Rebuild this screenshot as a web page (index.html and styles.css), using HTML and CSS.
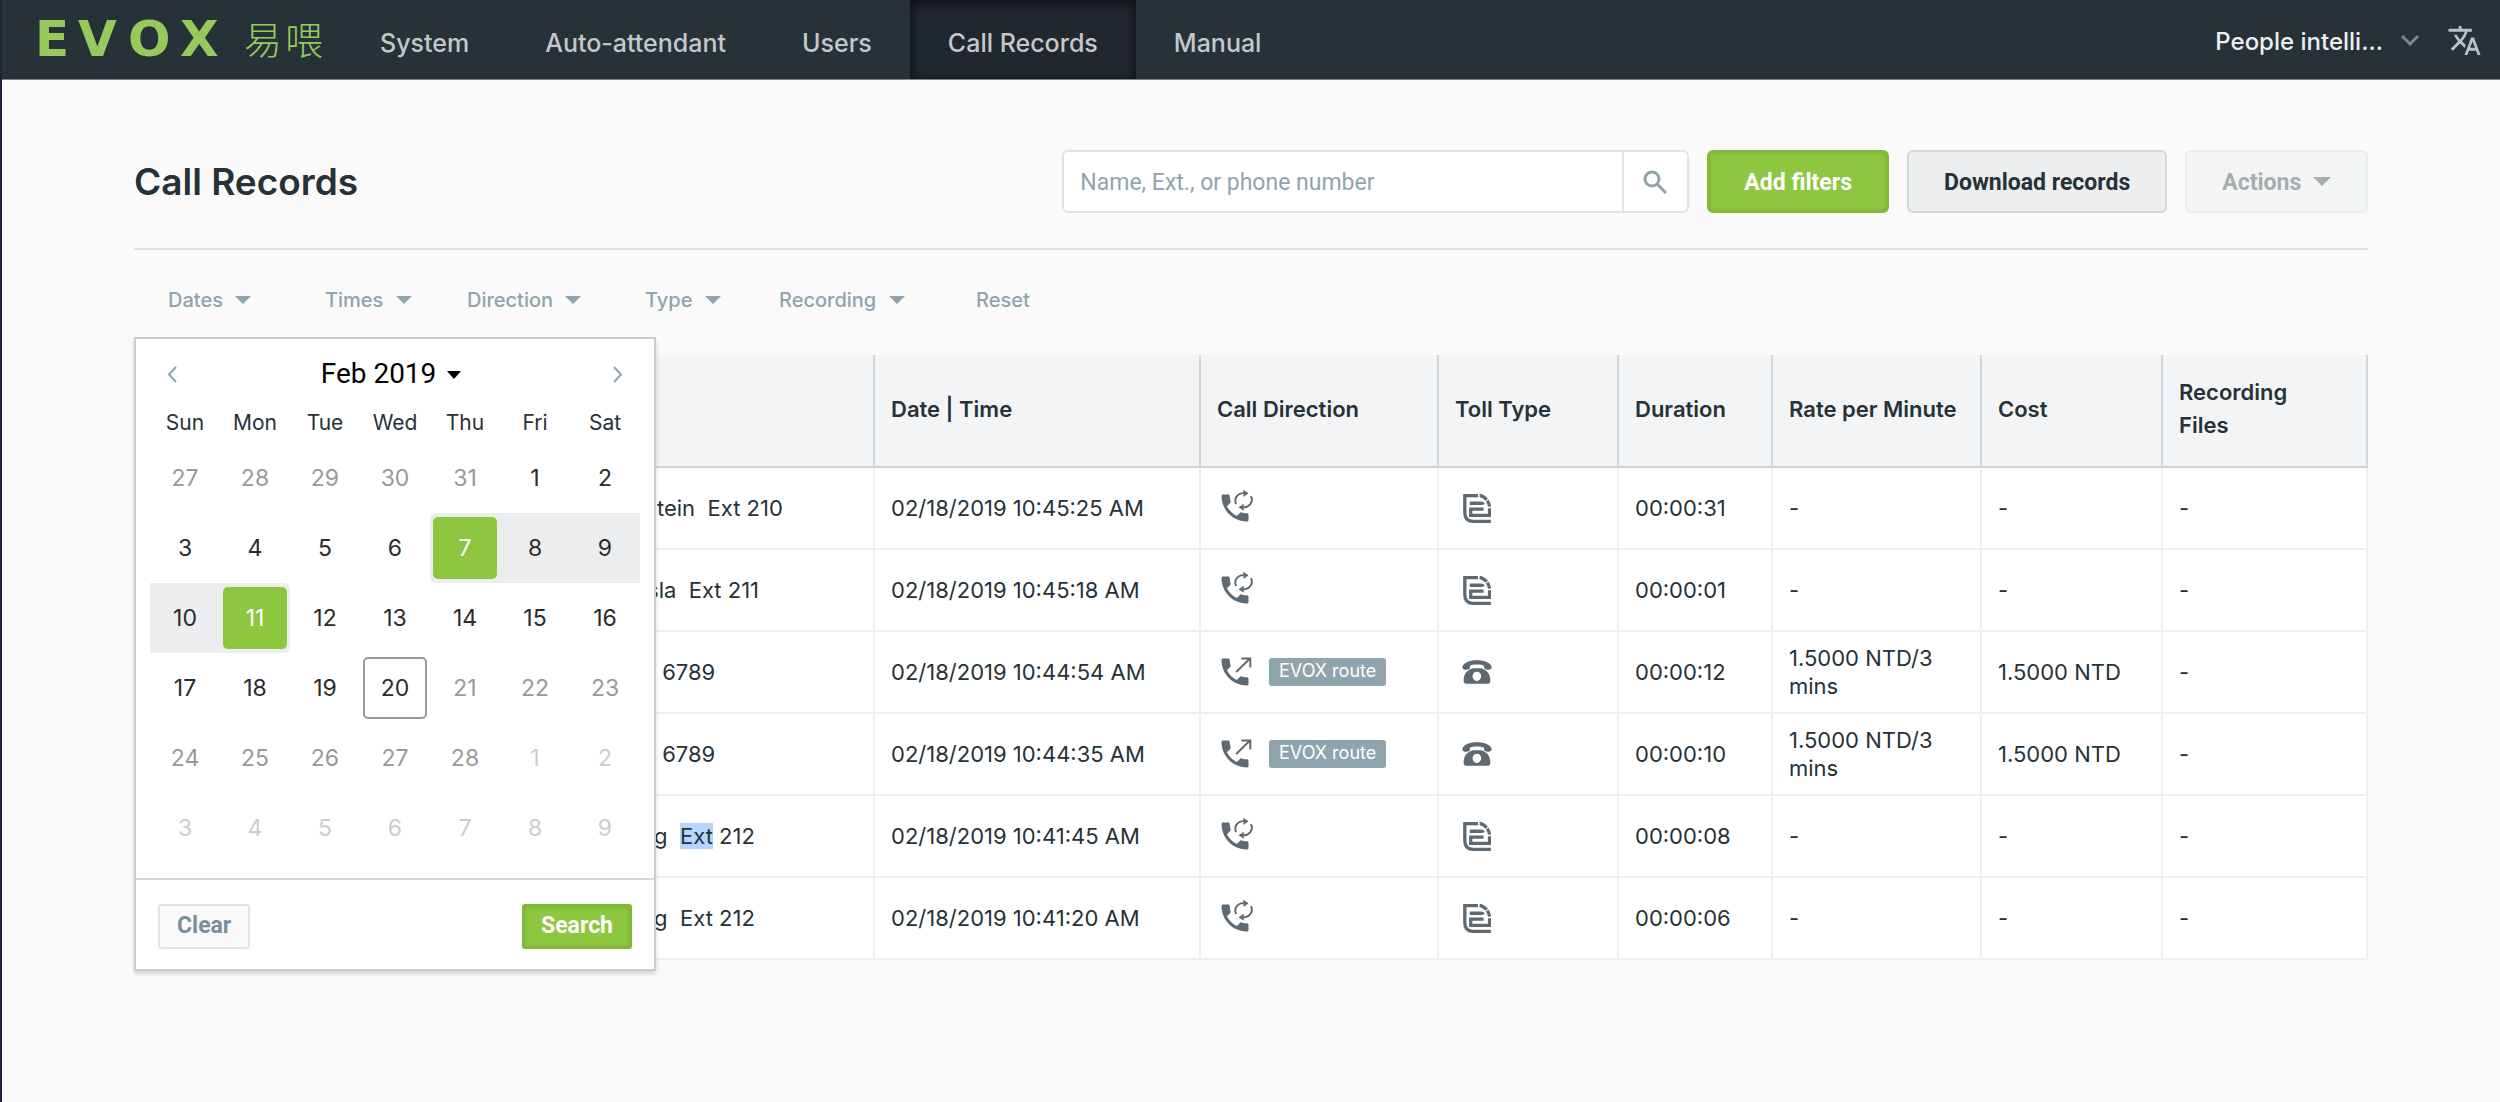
FILE: index.html
```
<!DOCTYPE html>
<html lang="en">
<head>
    <meta charset="UTF-8">
    <meta name="viewport" content="width=device-width, initial-scale=1.0">
    <title>Call Records</title>
    <link rel="stylesheet" href="styles.css">
</head>
<body>
    <svg class="sprite" aria-hidden="true">
        <symbol id="handset" viewBox="0 0 24 24">
            <path d="M6.62 10.79c1.44 2.83 3.76 5.14 6.59 6.59l2.2-2.2c.27-.27.67-.36 1.02-.24 1.12.37 2.33.57 3.57.57.55 0 1 .45 1 1V20c0 .55-.45 1-1 1-9.39 0-17-7.61-17-17 0-.55.45-1 1-1h3.5c.55 0 1 .45 1 1 0 1.25.2 2.45.57 3.57.11.35.03.74-.25 1.02l-2.2 2.2z"/>
        </symbol>
        <symbol id="call-internal" viewBox="0 0 24 24" overflow="visible">
            <use href="#handset" width="24" height="24"/>
            <path class="line" d="M12.8 9.4A5.4 5 0 0 1 17.8 2.1M22.6 4.2A5.4 5 0 0 1 17.6 11.5"/>
            <path d="M17.6 -.2l3.4 2.4-3.4 2.4zM17.8 9.1l-3.400 2.400 3.400 2.400z"/>
        </symbol>
        <symbol id="call-outgoing" viewBox="0 0 24 24">
            <use href="#handset" width="24" height="24"/>
            <path class="line" d="M12.8 12L22 3M16.2 3h6v6"/>
        </symbol>
        <symbol id="toll-internal" viewBox="0 0 84 88">
            <path class="doc" d="M45 5H5V56Q5 83 30 83H84"/>
            <path class="doc" d="M20 28H54Q60 28 61 32M62 46H23V65H80V43"/>
            <path class="doc fold" d="M50 4C60 5 78 18 80 38"/>
        </symbol>
        <symbol id="toll-phone" viewBox="0 0 91 72">
            <path d="M1 22C2 8 22 0 45.500 0S89 8 90 22C90 31 69 31 67 25V17C60 12 31 12 24 17V25C22 31 1 31 1 22z"/>
            <path fill-rule="evenodd" d="M33 25H58C76 29 86 44 86 62Q86 72 78 72H13Q5 72 5 62C5 44 15 29 33 25zM45 35a13 14 0 1 0 .1 0z"/>
        </symbol>
    </svg>

    <header class="topbar">
        <a class="logo" href="#" aria-label="EVOX">
            <svg width="300" height="50" viewBox="0 0 300 50">
                <text class="logo-latin" x="0 43 93 145" y="41">EVOX</text>
                <text class="logo-han" x="209 250" y="39">易喂</text>
            </svg>
        </a>
        <nav class="nav">
            <a href="#">System</a>
            <a href="#">Auto-attendant</a>
            <a href="#">Users</a>
            <a href="#" class="active">Call Records</a>
            <a href="#">Manual</a>
        </nav>
        <button type="button" class="account">People intelli...
            <svg width="18" height="12" viewBox="0 0 18 12"><path d="M1 1l8 8 8-8"/></svg>
        </button>
        <button type="button" class="language" aria-label="Language">
            <svg width="35" height="35" viewBox="0 0 24 24"><path d="M12.870 15.070l-2.540-2.510.030-.030c1.740-1.940 2.980-4.170 3.710-6.530H17V4h-7V2H8v2H1v1.990h11.170C11.500 7.920 10.440 9.750 9 11.350 8.070 10.320 7.300 9.190 6.690 8h-2c.73 1.630 1.730 3.170 2.980 4.560l-5.090 5.020L4 19l5-5 3.110 3.110.76-2.040zM18.500 10h-2L12 22h2l1.120-3h4.750L21 22h2l-4.500-12zm-2.620 7l1.620-4.330L19.120 17h-3.240z"/></svg>
        </button>
    </header>

    <main class="page">
        <div class="toolbar">
            <h1>Call Records</h1>
            <form class="search">
                <input type="text" placeholder="Name, Ext., or phone number" aria-label="Search call records">
                <button type="submit" aria-label="Search records">
                    <svg width="24" height="24" viewBox="0 0 24 24"><circle cx="9" cy="9" r="7"/><path d="M14 14l9 9"/></svg>
                </button>
            </form>
            <button type="button" class="btn btn-primary">Add filters</button>
            <button type="button" class="btn">Download records</button>
            <button type="button" class="btn btn-actions" disabled>Actions <span class="caret"></span></button>
        </div>

        <div class="filters">
            <button type="button">Dates <span class="caret"></span></button>
            <button type="button">Times <span class="caret"></span></button>
            <button type="button">Direction <span class="caret"></span></button>
            <button type="button">Type <span class="caret"></span></button>
            <button type="button">Recording <span class="caret"></span></button>
            <button type="button">Reset</button>

            <div class="datepicker">
                <div class="month">
                    <button type="button" aria-label="Previous month"><svg width="11" height="17" viewBox="0 0 11 17"><path d="M9 1L2 8.500l7 7.500"/></svg></button>
                    <button type="button" class="month-name">Feb 2019 <span class="caret"></span></button>
                    <button type="button" aria-label="Next month"><svg width="11" height="17" viewBox="0 0 11 17"><path d="M2 1l7 7.500L2 16"/></svg></button>
                </div>
                <table class="days">
                    <thead>
                        <tr><th>Sun</th><th>Mon</th><th>Tue</th><th>Wed</th><th>Thu</th><th>Fri</th><th>Sat</th></tr>
                    </thead>
                    <tbody>
                        <tr><td class="off">27</td><td class="off">28</td><td class="off">29</td><td class="off">30</td><td class="off">31</td><td>1</td><td>2</td></tr>
                        <tr><td>3</td><td>4</td><td>5</td><td>6</td><td class="range range-start"><span>7</span></td><td class="range">8</td><td class="range">9</td></tr>
                        <tr><td class="range">10</td><td class="range range-end"><span>11</span></td><td>12</td><td>13</td><td>14</td><td>15</td><td>16</td></tr>
                        <tr><td>17</td><td>18</td><td>19</td><td class="today"><span>20</span></td><td class="off">21</td><td class="off">22</td><td class="off">23</td></tr>
                        <tr><td class="off">24</td><td class="off">25</td><td class="off">26</td><td class="off">27</td><td class="off">28</td><td class="next">1</td><td class="next">2</td></tr>
                        <tr><td class="next">3</td><td class="next">4</td><td class="next">5</td><td class="next">6</td><td class="next">7</td><td class="next">8</td><td class="next">9</td></tr>
                    </tbody>
                </table>
                <div class="datepicker-footer">
                    <button type="button" class="btn btn-small btn-clear">Clear</button>
                    <button type="button" class="btn btn-small btn-primary">Search</button>
                </div>
            </div>
        </div>

        <table class="records">
            <colgroup>
                <col class="c-from"><col class="c-to"><col class="c-date"><col class="c-direction"><col class="c-toll"><col class="c-duration"><col class="c-rate"><col class="c-cost"><col class="c-files">
            </colgroup>
            <thead>
                <tr><th></th><th></th><th>Date | Time</th><th>Call Direction</th><th>Toll Type</th><th>Duration</th><th>Rate per Minute</th><th>Cost</th><th>Recording<br>Files</th></tr>
            </thead>
            <tbody>
                <tr>
                    <td></td>
                    <td>Albert Einstein&nbsp; Ext 210</td>
                    <td>02/18/2019 10:45:25 AM</td>
                    <td><svg class="icon"><use href="#call-internal"/></svg></td>
                    <td><svg class="icon-doc"><use href="#toll-internal"/></svg></td>
                    <td>00:00:31</td><td>-</td><td>-</td><td>-</td>
                </tr>
                <tr>
                    <td></td>
                    <td>Nikola&nbsp; Tesla&nbsp; Ext 211</td>
                    <td>02/18/2019 10:45:18 AM</td>
                    <td><svg class="icon"><use href="#call-internal"/></svg></td>
                    <td><svg class="icon-doc"><use href="#toll-internal"/></svg></td>
                    <td>00:00:01</td><td>-</td><td>-</td><td>-</td>
                </tr>
                <tr>
                    <td></td>
                    <td>886-2345&nbsp; 6789</td>
                    <td>02/18/2019 10:44:54 AM</td>
                    <td><div class="direction"><svg class="icon"><use href="#call-outgoing"/></svg><span class="route">EVOX route</span></div></td>
                    <td><svg class="icon-phone"><use href="#toll-phone"/></svg></td>
                    <td>00:00:12</td><td>1.5000 NTD/3 mins</td><td>1.5000 NTD</td><td>-</td>
                </tr>
                <tr>
                    <td></td>
                    <td>886-2345&nbsp; 6789</td>
                    <td>02/18/2019 10:44:35 AM</td>
                    <td><div class="direction"><svg class="icon"><use href="#call-outgoing"/></svg><span class="route">EVOX route</span></div></td>
                    <td><svg class="icon-phone"><use href="#toll-phone"/></svg></td>
                    <td>00:00:10</td><td>1.5000 NTD/3 mins</td><td>1.5000 NTD</td><td>-</td>
                </tr>
                <tr>
                    <td></td>
                    <td>Kevin Wang&nbsp; <mark>Ext</mark> 212</td>
                    <td>02/18/2019 10:41:45 AM</td>
                    <td><svg class="icon"><use href="#call-internal"/></svg></td>
                    <td><svg class="icon-doc"><use href="#toll-internal"/></svg></td>
                    <td>00:00:08</td><td>-</td><td>-</td><td>-</td>
                </tr>
                <tr>
                    <td></td>
                    <td>Kevin Wang&nbsp; Ext 212</td>
                    <td>02/18/2019 10:41:20 AM</td>
                    <td><svg class="icon"><use href="#call-internal"/></svg></td>
                    <td><svg class="icon-doc"><use href="#toll-internal"/></svg></td>
                    <td>00:00:06</td><td>-</td><td>-</td><td>-</td>
                </tr>
            </tbody>
        </table>
    </main>
</body>
</html>
```
FILE: styles.css
```
* { box-sizing: border-box; }
body { margin: 0; min-height: 100vh; border-left: 2px solid #1b2638; background: #fafafa; color: #263238; font-family: Inter, "Liberation Sans", sans-serif; font-size: 22px; }
button { border: 0; padding: 0; background: none; color: inherit; font: inherit; cursor: pointer; }
svg { display: block; fill: currentColor; }
.sprite { position: absolute; width: 0; height: 0; }
.caret { display: inline-block; border: 9px solid transparent; border-top-color: currentColor; border-bottom: 0; }

/* top bar */
.topbar { display: flex; align-items: stretch; height: 80px; border-bottom: 1px solid #78868e; background: #263238; }
.logo { width: 340px; padding: 15px 0 0 33px; color: #97c95c; }
.logo svg { overflow: visible; }
.logo-latin { font-family: "DejaVu Sans", sans-serif; font-size: 50px; font-weight: bold; }
.logo-han { font-family: "Noto Sans CJK TC", sans-serif; font-size: 38px; font-weight: 300; }
.nav { display: flex; margin-right: auto; }
.nav a { display: flex; align-items: center; padding: 6px 38px 0; color: #c5c8ca; font-size: 25px; font-weight: 500; text-decoration: none; }
.nav .active { background: #20272d; box-shadow: inset 0 5px 10px #0f1519, inset 0 0 6px #12181c; }
.account { display: flex; align-items: center; gap: 18px; padding-top: 3px; color: #eceff1; font-size: 24px; font-weight: 500; }
.account svg { fill: none; stroke: #7c868c; stroke-width: 3; }
.language { padding: 2px 18px 0 28px; color: #bcc1c4; }

/* page header */
.page { padding: 70px 132px; }
.toolbar { display: flex; align-items: center; gap: 18px; padding-bottom: 35px; border-bottom: 2px solid #dcdfe1; }
h1 { margin: 0 auto 0 0; font-size: 37px; font-weight: 600; line-height: 46px; }
.search { display: flex; width: 627px; height: 63px; border: 2px solid #dde4e9; border-radius: 6px; background: #fff; }
.search input { flex: 1; min-width: 0; border: 0; padding: 2px 16px 0; background: none; outline: 0; color: #263238; font-family: Roboto, sans-serif; font-size: 23px; }
.search input::placeholder { color: #90a4ae; opacity: 1; }
.search button { width: 65px; border-left: 2px solid #dde4e9; padding-left: 19px; color: #90a4ae; }
.search svg { fill: none; stroke: currentColor; stroke-width: 3; }
.btn { height: 63px; padding: 2px 35px 0; border: 2px solid #cfd8dc; border-radius: 6px; background: #eceef0; color: #263238; font-family: Roboto, sans-serif; font-size: 23px; font-weight: 700; }
.btn-primary { border-color: #83b93a; background: #8dc63f; box-shadow: inset 0 0 4px #74a930; color: #fff; }
.btn-actions { border-color: #e8edee; background: #f4f6f6; color: #a7adb0; cursor: default; }
.btn-actions .caret { margin: 0 0 4px 6px; }

/* filters */
.filters { position: relative; display: grid; grid-template-columns: 157px 142px 178px 134px 197px auto; align-items: center; height: 105px; padding: 0 0 5px 34px; color: #90a4ae; font-size: 20px; font-weight: 500; }
.filters > button { text-align: left; }
.filters > button .caret { border-width: 8px 8px 0; margin: 0 0 3px 7px; }

/* date picker */
.datepicker { position: absolute; z-index: 1; top: 87px; left: 0; width: 522px; border: 2px solid #cbcccd; background: #fff; box-shadow: 0 3px 4px rgba(0, 0, 0, 0.15); color: #263238; font-weight: 400; }
.month { display: flex; align-items: center; justify-content: space-between; height: 64px; padding: 6px 31px 0; color: #90a4ae; }
.month svg { fill: none; stroke: currentColor; stroke-width: 2; }
.month-name { padding: 0 8px 2px 0; color: #000; font-family: Roboto, sans-serif; font-size: 28px; }
.month-name .caret { border-width: 8px 7px 0; margin: 0 0 4px 4px; }
.days { width: 490px; margin: 0 14px; border-collapse: collapse; table-layout: fixed; text-align: center; }
.days th { height: 40px; padding: 0 0 2px; font-size: 21px; font-weight: 400; }
.days td { height: 70px; padding: 0; color: #2b2b2b; font-size: 23px; }
.days .off { color: #999; }
.days .next { color: #ccc; }
.days .range { background: #ecedef; }
.days .range-start { border-radius: 6px 0 0 6px; }
.days .range-end { border-radius: 0 6px 6px 0; }
.days span { display: block; height: 62px; margin: 0 3px; border-radius: 5px; line-height: 62px; }
.days .range span { background: #8dc63f; color: #fff; }
.days .today span { border: 2px solid #999; line-height: 58px; }
.datepicker-footer { display: flex; justify-content: space-between; margin-top: 15px; padding: 24px 22px 20px; border-top: 2px solid #d6d8d9; }
.btn-small { height: 45px; padding: 0 17px 2px; border-radius: 3px; }
.btn-clear { border-color: #dde4e9; background: #fafafa; color: #78909c; }

/* records table */
.records { width: 100%; border-spacing: 0; table-layout: fixed; }
.records th, .records td { padding: 0 16px; text-align: left; vertical-align: middle; }
.records th { height: 113px; padding-bottom: 3px; border-right: 2px solid #d0d6da; border-bottom: 2px solid #ccd4d9; background: #f3f4f6; font-weight: 600; line-height: 33px; }
.records td { height: 82px; border-right: 2px solid #edeff1; border-bottom: 2px solid #edeff1; background: #fff; line-height: 28px; }
.c-from { width: 395px; }
.c-to { width: 346px; }
.c-date { width: 326px; }
.c-direction { width: 238px; }
.c-toll { width: 180px; }
.c-duration { width: 154px; }
.c-rate { width: 209px; }
.c-cost { width: 181px; }
.c-files { width: 205px; }
.records svg { color: #5f6972; overflow: visible; }
.icon { width: 36px; height: 36px; }
.icon-doc { width: 28px; height: 29px; margin-left: 8px; }
.icon-phone { width: 30px; height: 24px; margin-left: 7px; }
.line { fill: none; stroke: currentColor; stroke-width: 1.3; }
.doc { fill: none; stroke: currentColor; stroke-width: 10; }
.fold { stroke-dasharray: 26 3; }
.direction { display: flex; align-items: center; gap: 16px; }
.route { height: 28px; padding: 0 10px; border-radius: 3px; background: #90a4ae; color: #fff; font-size: 18px; line-height: 26px; }
mark { background: #b4d5fe; color: inherit; }
```
